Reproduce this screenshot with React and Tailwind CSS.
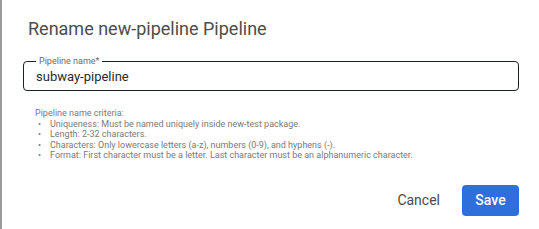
export default function App() {
  const rules = [
    "Uniqueness: Must be named uniquely inside new-test package.",
    "Length: 2-32 characters.",
    "Characters: Only lowercase letters (a-z), numbers (0-9), and hyphens (-).",
    "Format: First character must be a letter. Last character must be an alphanumeric character.",
  ];

  return (
    <div
      className="w-[539px] h-[229px] bg-white border-l-2 border-[#9a9a9a] flex flex-col"
      style={{ fontFamily: "Roboto, 'Liberation Sans', sans-serif" }}
    >
      <h1 className="text-[18px] leading-[24px] text-[#4d4d4d] pl-[26px] pt-[17px]">Rename new-pipeline Pipeline</h1>

      <div className="pl-[21px] pr-[20px] mt-[20px]">
        <div className="relative h-[30px] border border-[#1b1f27] rounded-[4px] flex items-center px-[12px]">
          <span className="absolute -top-[7px] left-[12px] bg-white px-[3px] text-[9px] leading-[12px] text-[#6a6a6a]">Pipeline name*</span>
          <span className="text-[13px] text-[#2a2a2a] pt-[2px]">subway-pipeline</span>
        </div>
      </div>

      <div className="pl-[33px] mt-[17px] text-[9px] leading-[10.5px] text-[#7a7a7a]">
        <p>Pipeline name criteria:</p>
        <ul>
          {rules.map((r) => (
            <li key={r} className="flex">
              <span className="w-[15px] pl-[3px]">•</span>
              <span>{r}</span>
            </li>
          ))}
        </ul>
      </div>

      <div className="flex-1 flex items-end justify-end pr-[20px] pb-[13px] gap-[22px]">
        <button className="h-[31px] text-[14px] text-[#4a4a4a]">Cancel</button>
        <button className="h-[31px] w-[57px] rounded-[4px] bg-[#2f6fdb] text-white text-[14px] font-medium">Save</button>
      </div>
    </div>
  );
}
